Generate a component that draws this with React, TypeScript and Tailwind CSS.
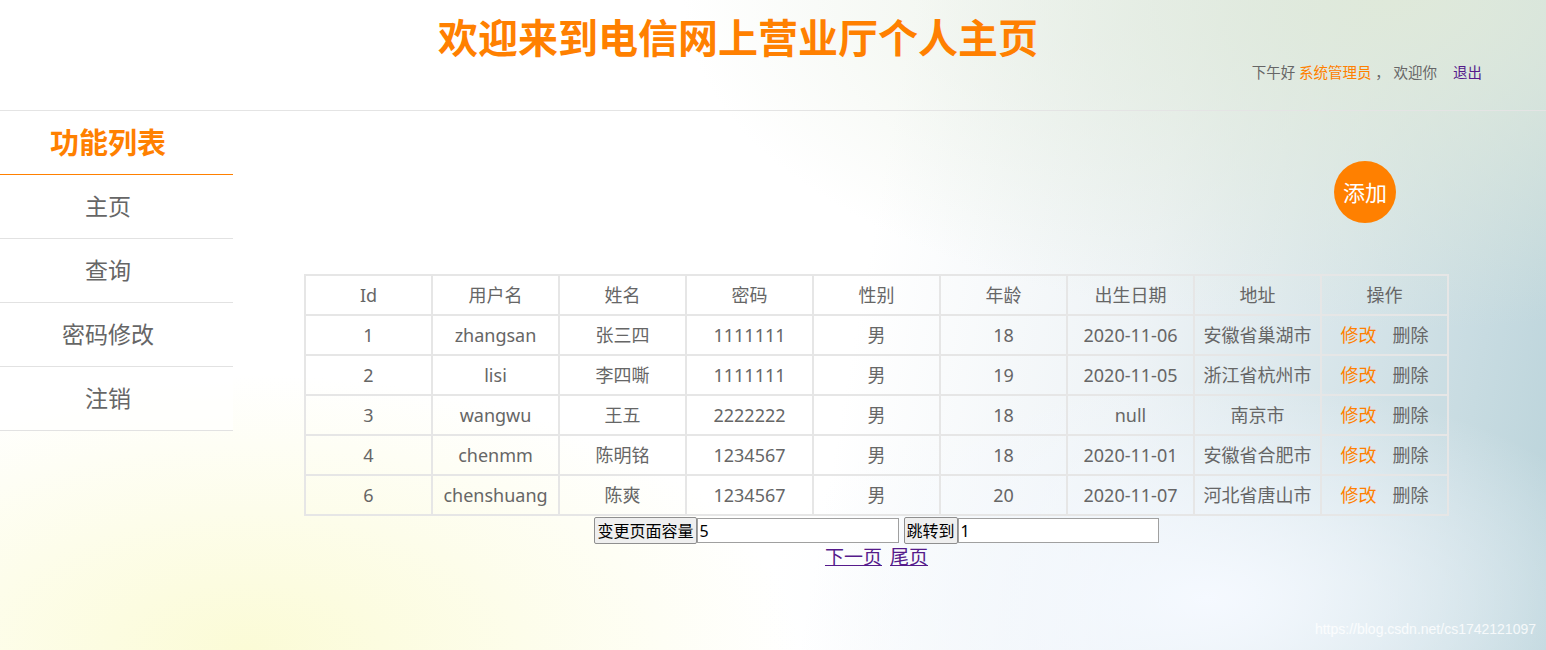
import React from 'react';

interface UserRow {
  id: number;
  username: string;
  name: string;
  password: string;
  sex: string;
  age: number;
  birthday: string;
  address: string;
}

const rows: UserRow[] = [
  { id: 1, username: 'zhangsan', name: '张三四', password: '1111111', sex: '男', age: 18, birthday: '2020-11-06', address: '安徽省巢湖市' },
  { id: 2, username: 'lisi', name: '李四嘶', password: '1111111', sex: '男', age: 19, birthday: '2020-11-05', address: '浙江省杭州市' },
  { id: 3, username: 'wangwu', name: '王五', password: '2222222', sex: '男', age: 18, birthday: 'null', address: '南京市' },
  { id: 4, username: 'chenmm', name: '陈明铭', password: '1234567', sex: '男', age: 18, birthday: '2020-11-01', address: '安徽省合肥市' },
  { id: 6, username: 'chenshuang', name: '陈爽', password: '1234567', sex: '男', age: 20, birthday: '2020-11-07', address: '河北省唐山市' },
];

const headers = ['Id', '用户名', '姓名', '密码', '性别', '年龄', '出生日期', '地址', '操作'];

const menu = ['主页', '查询', '密码修改', '注销'];

const cell = 'border-2 border-[#e6e6e6] h-[40px] p-0 text-center font-normal';

const App: React.FC = () => {
  return (
    <div
      className="relative min-h-[650px] w-full overflow-hidden text-[#666] font-['Noto_Sans','Noto_Sans_CJK_SC',sans-serif] bg-[radial-gradient(ellipse_at_16%_100%,#fbfbd6_0%,rgba(255,255,255,0)_30%),radial-gradient(ellipse_at_78%_92%,#f5f9ff_0%,rgba(255,255,255,0)_26%),radial-gradient(ellipse_at_90%_0%,#dfe9da_0%,rgba(255,255,255,0)_36%),linear-gradient(100deg,#ffffff_55%,#eef3f6_72%,#bad3da_100%)]"
    >
      {/* header */}
      <header className="h-[111px] border-b border-[#e4e4e4] flex justify-center">
        <h1 className="mt-[12px] mr-[70px] text-[40px] leading-[52px] font-bold text-[#ff8000]">
          欢迎来到电信网上营业厅个人主页
        </h1>
        <div className="absolute right-[64px] top-[62px] text-[14.5px] leading-[20px] text-[#666]">
          下午好 <span className="text-[#ff8000]">系统管理员</span> ， 欢迎你
          <a href="#" className="ml-[16px] text-[#551a8b]">退出</a>
        </div>
      </header>

      <div className="flex">
        {/* sidebar */}
        <aside className="w-[233px] shrink-0">
          <div className="h-[64px] pr-[17px] border-b-[1.5px] border-[#ff8000] bg-white/60 flex items-center justify-center text-[29px] font-bold text-[#ff8000]">
            功能列表
          </div>
          {menu.map((m) => (
            <div key={m} className="h-[64px] pr-[17px] border-b border-[#e2e2e2] bg-white/60 flex items-center justify-center text-[23px] text-[#666]">
              {m}
            </div>
          ))}
        </aside>

        {/* main */}
        <main className="flex-1">
          <div className="ml-[71px] w-[1145px]">
            <div className="h-[163px] flex justify-end pt-[50px] pr-[53px]">
              <button className="w-[62px] h-[62px] rounded-full bg-[#ff8000] text-white text-[22px] flex items-center justify-center">
                添加
              </button>
            </div>
            <table className="w-[1145px] table-fixed border-collapse border-2 border-[#e6e6e6] text-[18px] text-[#666]">
              <thead>
                <tr>
                  {headers.map((h) => (
                    <th key={h} className={cell}>{h}</th>
                  ))}
                </tr>
              </thead>
              <tbody>
                {rows.map((r) => (
                  <tr key={r.id}>
                    <td className={cell}>{r.id}</td>
                    <td className={cell}>{r.username}</td>
                    <td className={cell}>{r.name}</td>
                    <td className={cell}>{r.password}</td>
                    <td className={cell}>{r.sex}</td>
                    <td className={cell}>{r.age}</td>
                    <td className={cell}>{r.birthday}</td>
                    <td className={cell}>{r.address}</td>
                    <td className={cell}>
                      <span className="text-[#ff8000]">修改</span>
                      <span className="ml-[16px]">删除</span>
                    </td>
                  </tr>
                ))}
              </tbody>
            </table>
            <div className="flex justify-center items-center mt-[1px] text-black text-[16px]">
              <button className="h-[27px] px-[2px] border border-[#8f8f8f] rounded-[2px] bg-[#efefef] leading-[22px]">
                变更页面容量
              </button>
              <input
                defaultValue="5"
                className="h-[25px] w-[202px] border border-[#a0a0a0] bg-white px-[2px] text-[16px] outline-none"
              />
              <button className="ml-[5px] h-[27px] px-[2px] border border-[#8f8f8f] rounded-[2px] bg-[#efefef] leading-[22px]">
                跳转到
              </button>
              <input
                defaultValue="1"
                className="h-[25px] w-[201px] border border-[#a0a0a0] bg-white px-[2px] text-[16px] outline-none"
              />
            </div>
            <div className="flex justify-center gap-[8px] text-[19px] leading-[26px] text-[#551a8b]">
              <a href="#" className="underline">下一页</a>
              <a href="#" className="underline">尾页</a>
            </div>
          </div>
        </main>
      </div>

      <div className="absolute right-[10px] bottom-[10px] text-[14px] text-white/80 font-['Liberation_Sans',sans-serif]">
        https://blog.csdn.net/cs1742121097
      </div>
    </div>
  );
};

export default App;
